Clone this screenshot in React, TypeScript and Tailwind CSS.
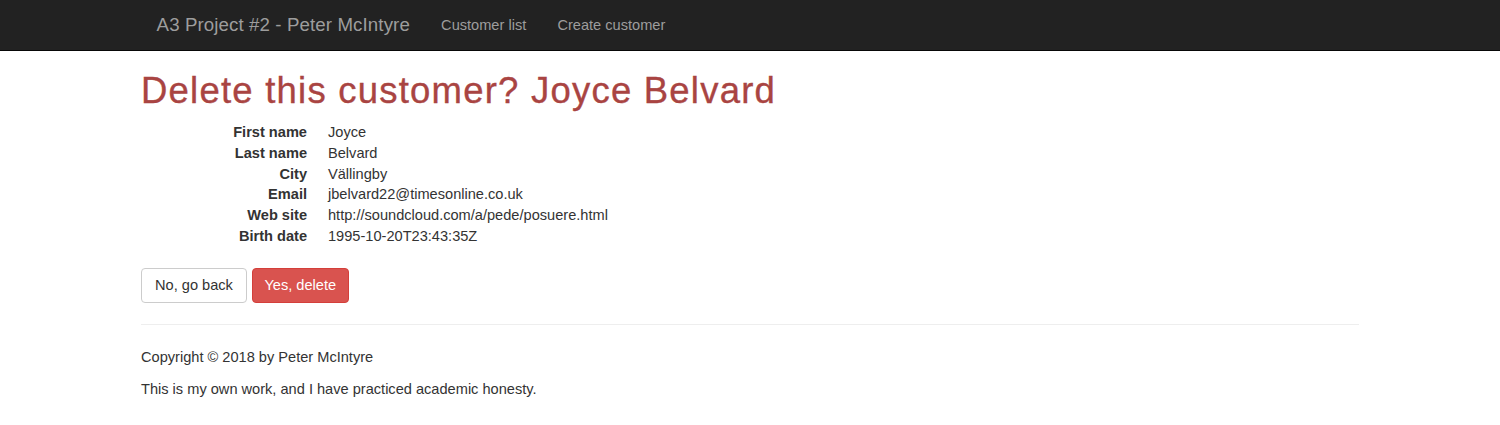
import React from 'react';

const customer = [
  ['First name', 'Joyce'],
  ['Last name', 'Belvard'],
  ['City', 'Vällingby'],
  ['Email', 'jbelvard22@timesonline.co.uk'],
  ['Web site', 'http://soundcloud.com/a/pede/posuere.html'],
  ['Birth date', '1995-10-20T23:43:35Z'],
];

export default function App() {
  return (
    <div className="min-h-screen bg-white text-[#333] text-[14.6px] leading-[20.8px] font-['Liberation_Sans',Arial,sans-serif]">
      {/* navbar */}
      <nav className="h-[51px] bg-[#222] border-b border-[#080808]">
        <div className="w-[1218px] mx-auto flex items-center h-[50px]">
          <a className="px-[15.6px] text-[18.7px] tracking-[0.1px] text-[#9d9d9d]">A3 Project #2 - Peter McIntyre</a>
          <a className="px-[15.6px] text-[#9d9d9d]">Customer list</a>
          <a className="px-[15.6px] text-[#9d9d9d]">Create customer</a>
        </div>
      </nav>

      <main className="w-[1218px] mx-auto">
        <h1 className="mt-[19px] mb-[11px] text-[36.5px] leading-[41px] tracking-[1.22px] text-[#a94442] [-webkit-text-stroke:0.35px_#a94442]">
          Delete this customer? Joyce Belvard
        </h1>

        <dl className="mb-[20.8px]">
          {customer.map(([label, value]) => (
            <div key={label} className="flex">
              <dt className="w-[166px] text-right font-bold shrink-0">{label}</dt>
              <dd className="ml-[21px]">{value}</dd>
            </div>
          ))}
        </dl>

        <div className="flex gap-[5px]">
          <button className="px-[13px] py-[6.25px] border border-[#ccc] rounded-[4px] bg-white text-[#333]">
            No, go back
          </button>
          <button className="px-[11.5px] py-[6.25px] border border-[#d43f3a] rounded-[4px] bg-[#d9534f] text-white">
            Yes, delete
          </button>
        </div>

        <hr className="mt-[20.8px] mb-[22.8px] border-0 border-t border-[#eee]" />

        <footer>
          <p className="mb-[10.4px]">Copyright © 2018 by Peter McIntyre</p>
          <p className="mb-[10.4px]">This is my own work, and I have practiced academic honesty.</p>
        </footer>
      </main>
    </div>
  );
}
